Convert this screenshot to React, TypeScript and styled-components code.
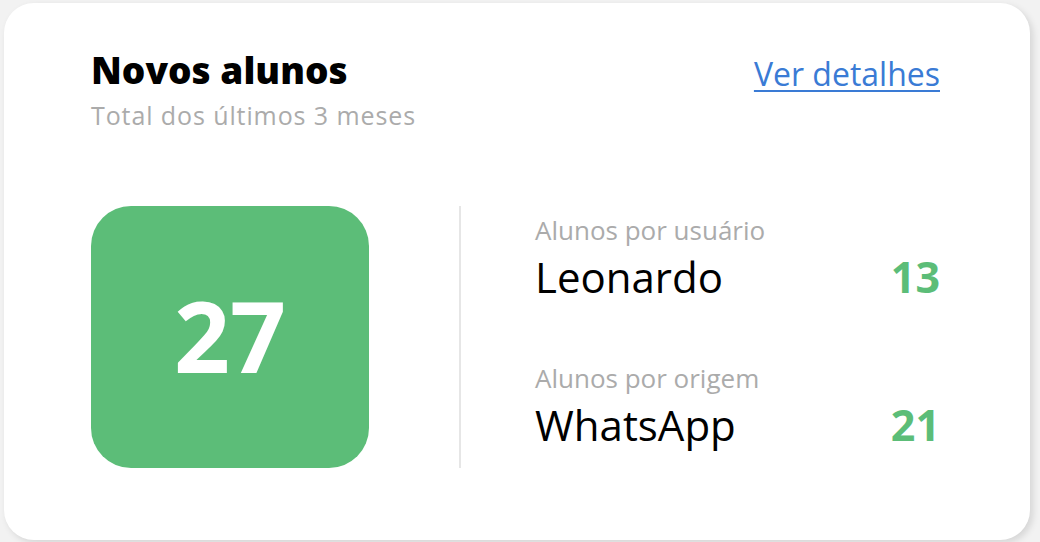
import styled, { createGlobalStyle } from 'styled-components';

const GlobalStyle = createGlobalStyle`
  html, body {
    margin: 0;
    padding: 0;
    background: #f2f2f2;
  }
  body {
    font-family: 'Open Sans', 'Noto Sans', sans-serif;
  }
`;

const Page = styled.main`
  padding: 3px 10px 2px 4px;
`;

const Card = styled.section`
  box-sizing: border-box;
  height: 537px;
  background: #ffffff;
  border-radius: 30px;
  box-shadow: 3px 3px 7px rgba(0, 0, 0, 0.12);
  padding: 44px 90px 0 87px;
  display: flex;
  flex-direction: column;
`;

const Header = styled.header`
  display: flex;
  justify-content: space-between;
  align-items: flex-start;
`;

const Title = styled.h2`
  margin: 0;
  font-size: 37px;
  font-weight: 800;
  color: #000;
  line-height: 46px;
`;

const Subtitle = styled.p`
  margin: 6px 0 0;
  font-size: 25px;
  letter-spacing: 0.9px;
  color: #ababab;
  line-height: 32px;
`;

const DetailsLink = styled.a`
  margin-top: 7px;
  font-size: 32px;
  line-height: 40px;
  color: #3a7bd5;
  text-decoration: underline;
  text-underline-offset: 4px;
  text-decoration-thickness: 2px;
`;

const Body = styled.div`
  display: flex;
  align-items: stretch;
  margin-top: 75px;
  height: 262px;
`;

const TotalBox = styled.div`
  width: 278px;
  border-radius: 40px;
  background: #5cbd78;
  color: #fff;
  display: flex;
  align-items: center;
  justify-content: center;
  font-size: 98px;
  font-weight: 700;
  padding-bottom: 4px;
  box-sizing: border-box;
`;

const Divider = styled.div`
  width: 2px;
  background: #e6e6e6;
  margin: 0 74px 0 90px;
`;

const Stats = styled.div`
  flex: 1;
  display: flex;
  flex-direction: column;
  gap: 59px;
  padding-top: 8px;
`;

const Stat = styled.div`
  display: flex;
  flex-direction: column;
  gap: 5px;
`;

const StatLabel = styled.span`
  font-size: 26px;
  line-height: 32px;
  color: #ababab;
`;

const StatRow = styled.div`
  display: flex;
  justify-content: space-between;
  align-items: baseline;
  line-height: 52px;
`;

const StatName = styled.span`
  font-size: 42px;
  color: #000;
`;

const StatValue = styled.span`
  font-size: 43px;
  font-weight: 700;
  color: #5cbd78;
`;

const stats = [
  { label: 'Alunos por usuário', name: 'Leonardo', value: 13 },
  { label: 'Alunos por origem', name: 'WhatsApp', value: 21 },
];

const App = () => {
  return (
    <Page>
      <GlobalStyle />
      <Card>
        <Header>
          <div>
            <Title>Novos alunos</Title>
            <Subtitle>Total dos últimos 3 meses</Subtitle>
          </div>
          <DetailsLink href="#">Ver detalhes</DetailsLink>
        </Header>
        <Body>
          <TotalBox>27</TotalBox>
          <Divider />
          <Stats>
            {stats.map((s) => (
              <Stat key={s.label}>
                <StatLabel>{s.label}</StatLabel>
                <StatRow>
                  <StatName>{s.name}</StatName>
                  <StatValue>{s.value}</StatValue>
                </StatRow>
              </Stat>
            ))}
          </Stats>
        </Body>
      </Card>
    </Page>
  );
};

export default App;
